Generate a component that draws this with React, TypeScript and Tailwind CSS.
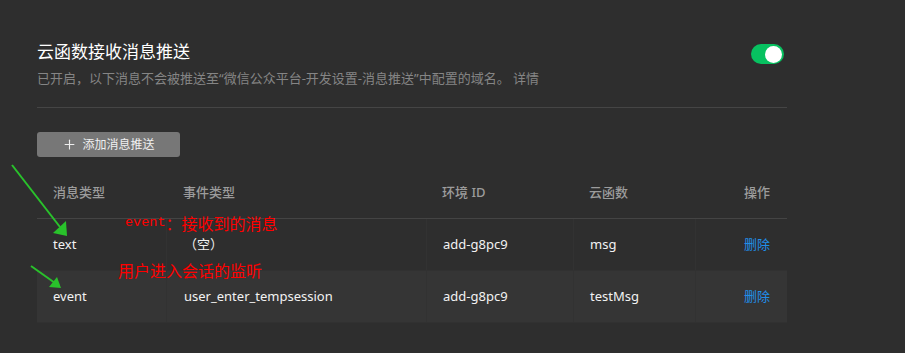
import { Plus } from "lucide-react"

type Row = {
  msgType: string
  eventType: string
  envId: string
  fn: string
}

const rows: Row[] = [
  { msgType: "text", eventType: "（空）", envId: "add-g8pc9", fn: "msg" },
  { msgType: "event", eventType: "user_enter_tempsession", envId: "add-g8pc9", fn: "testMsg" },
]

const cols = "grid grid-cols-[129px_260px_147px_122px_92px]"

function Toggle() {
  return (
    <div className="flex h-[20px] w-[33px] items-center justify-end rounded-full bg-[#07c160] px-[2px]">
      <div className="h-[17px] w-[17px] rounded-full bg-white" />
    </div>
  )
}

export default function App() {
  return (
    <div
      className="relative h-[353px] w-[905px] overflow-hidden bg-[#2e2e2e] pl-[37px] pt-[40px]"
      style={{ fontFamily: '"Noto Sans", "Noto Sans CJK SC", sans-serif' }}
    >
      <div className="w-[750px]">
        {/* Header */}
        <div className="flex items-start justify-between">
          <div>
            <h1 className="text-[17px] leading-[24px] text-white">云函数接收消息推送</h1>
            <p className="mt-[5px] text-[13px] leading-[18px] text-[#858585]">
              已开启，以下消息不会被推送至“微信公众平台-开发设置-消息推送”中配置的域名。 详情
            </p>
          </div>
          <div className="mr-[3px] mt-[4px]">
            <Toggle />
          </div>
        </div>

        <div className="mt-[20px] border-t border-[#454545]" />

        <button
          type="button"
          className="mt-[24px] flex h-[25px] w-[143px] items-center justify-center gap-[5px] rounded-[3px] bg-[#777777] text-[12px] text-[#f0f0f0]"
        >
          <Plus size={15} strokeWidth={1.8} className="text-[#eeeeee]" />
          添加消息推送
        </button>

        {/* Table */}
        <div className="mt-[11px] text-[13px]">
          <div className={`${cols} h-[51px] items-center border-b border-[#444444] font-medium text-[#9c9c9c]`}>
            <div className="pl-[16px]">消息类型</div>
            <div className="pl-[17px]">事件类型</div>
            <div className="pl-[16px]">环境 ID</div>
            <div className="pl-[16px]">云函数</div>
            <div className="pr-[17px] text-right">操作</div>
          </div>
          {rows.map((row, i) => (
            <div
              key={row.msgType}
              className={`${cols} h-[52px] items-stretch border-b border-[#313131] text-[#f2f2f2] ${
                i === 1 ? "bg-[#353535]" : "bg-[#2e2e2e]"
              }`}
            >
              <div className="flex items-center pl-[16px]">{row.msgType}</div>
              <div className="flex items-center border-l border-[#323232] pl-[17px]">{row.eventType}</div>
              <div className="flex items-center border-l border-[#323232] pl-[16px]">{row.envId}</div>
              <div className="flex items-center border-l border-[#323232] pl-[16px]">{row.fn}</div>
              <div className="flex items-center justify-end border-l border-[#323232] pr-[17px] text-[#1f8fea]">
                删除
              </div>
            </div>
          ))}
        </div>
      </div>

      {/* Red annotations */}
      <div className="absolute left-[125px] top-[213px] flex items-center text-[16px] leading-[20px] text-[#ff0000]">
        <span style={{ fontFamily: '"Liberation Mono", monospace' }} className="text-[13.5px]">
          event
        </span>
        <span style={{ fontFamily: '"Noto Sans CJK SC", sans-serif' }}>：接收到的消息</span>
      </div>
      <div
        className="absolute left-[118px] top-[260px] text-[16px] leading-[20px] text-[#ff0000]"
        style={{ fontFamily: '"Noto Sans CJK SC", sans-serif' }}
      >
        用户进入会话的监听
      </div>

      {/* Green arrows */}
      <svg className="pointer-events-none absolute left-0 top-0" width="905" height="353">
        <line x1="12" y1="165" x2="60" y2="227" stroke="#29c22b" strokeWidth="2" />
        <polygon points="53,233 66,221 67,236" fill="#29c22b" />
        <line x1="31" y1="266" x2="55" y2="283" stroke="#29c22b" strokeWidth="2" />
        <polygon points="49,287 57,277 61,288" fill="#29c22b" />
      </svg>
    </div>
  )
}
